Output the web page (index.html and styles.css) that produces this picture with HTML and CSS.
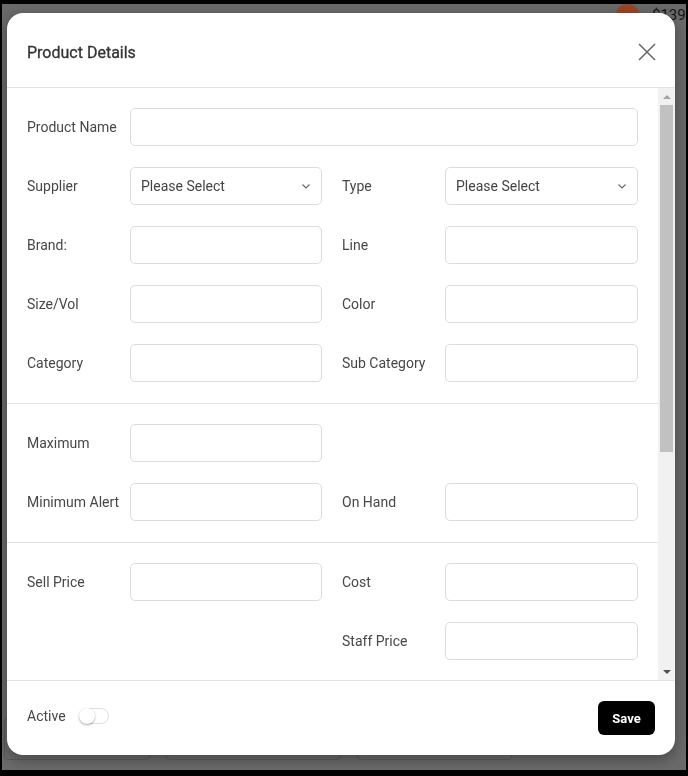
FILE: index.html
```html
<!DOCTYPE html>
<html lang="en">
<head>
    <meta charset="UTF-8">
    <meta name="viewport" content="width=device-width, initial-scale=1.0">
    <title>Product Details</title>
    <link rel="stylesheet" href="styles.css">
</head>
<body>
    <div class="page">
        <div class="topbar">
            <span class="avatar"></span>
            <span class="balance">$139</span>
        </div>
        <div class="cards">
            <div class="card"></div>
            <div class="card"></div>
            <div class="card"></div>
        </div>
    </div>

    <div class="modal">
        <div class="modal-header">
            <h2 class="modal-title">Product Details</h2>
            <button class="close-btn" type="button" aria-label="Close">
                <svg width="18" height="18" viewBox="0 0 18 18"><path d="M1 1L17 17M17 1L1 17" stroke="#6b6b6b" stroke-width="1.6" fill="none"/></svg>
            </button>
        </div>

        <div class="modal-body">
            <div class="scroll-content">
                <div class="section">
                    <label class="field-label">Product Name</label>
                    <input class="field wide" type="text">

                    <label class="field-label">Supplier</label>
                    <div class="select-wrap">
                        <select class="field"><option>Please Select</option></select>
                        <svg class="chev" width="8" height="5" viewBox="0 0 8 5"><path d="M0.5 0.5L4 4L7.5 0.5" stroke="#666" stroke-width="1.1" fill="none"/></svg>
                    </div>
                    <label class="field-label right">Type</label>
                    <div class="select-wrap">
                        <select class="field"><option>Please Select</option></select>
                        <svg class="chev" width="8" height="5" viewBox="0 0 8 5"><path d="M0.5 0.5L4 4L7.5 0.5" stroke="#666" stroke-width="1.1" fill="none"/></svg>
                    </div>

                    <label class="field-label">Brand:</label>
                    <input class="field" type="text">
                    <label class="field-label right">Line</label>
                    <input class="field" type="text">

                    <label class="field-label">Size/Vol</label>
                    <input class="field" type="text">
                    <label class="field-label right">Color</label>
                    <input class="field" type="text">

                    <label class="field-label">Category</label>
                    <input class="field" type="text">
                    <label class="field-label right">Sub Category</label>
                    <input class="field" type="text">
                </div>

                <div class="section">
                    <label class="field-label">Maximum</label>
                    <input class="field" type="number">
                    <span></span><span></span>

                    <label class="field-label">Minimum Alert</label>
                    <input class="field" type="number">
                    <label class="field-label right">On Hand</label>
                    <input class="field" type="number">
                </div>

                <div class="section last">
                    <label class="field-label">Sell Price</label>
                    <input class="field" type="number">
                    <label class="field-label right">Cost</label>
                    <input class="field" type="number">

                    <span></span><span></span>
                    <label class="field-label right">Staff Price</label>
                    <input class="field" type="number">
                </div>
            </div>

            <div class="scrollbar">
                <span class="arrow up"></span>
                <div class="track"><div class="thumb"></div></div>
                <span class="arrow down"></span>
            </div>
        </div>

        <div class="modal-footer">
            <div class="active-row">
                <span class="field-label">Active</span>
                <span class="toggle"><span class="knob"></span></span>
            </div>
            <button class="save-btn" type="button">Save</button>
        </div>
    </div>
</body>
</html>
```

FILE: styles.css
```css
html, body {
    margin: 0;
    padding: 0;
}
body {
    background-color: #000;
    font-family: Roboto, "Liberation Sans", Arial, sans-serif;
    width: 688px;
    height: 776px;
    overflow: hidden;
}
.page {
    margin: 4px 2px 0 2px;
    height: 766px;
    background-color: #6a6a6a;
    display: flex;
    flex-direction: column;
}
.topbar {
    display: flex;
    justify-content: flex-end;
    align-items: center;
    gap: 12px;
    height: 22px;
    overflow: hidden;
}
.avatar {
    width: 25px;
    height: 25px;
    border-radius: 50%;
    background-color: #9c4526;
    margin-top: 2px;
}
.balance {
    font-size: 15px;
    color: #151515;
    width: 34px;
    overflow: hidden;
    white-space: nowrap;
}
.cards {
    margin-top: auto;
    margin-bottom: 10px;
    display: flex;
    gap: 16px;
    padding-left: 2px;
}
.card {
    height: 40px;
    border: 1px solid #5a5a5a;
    border-radius: 4px;
}
.card:nth-child(1) { width: 144px; }
.card:nth-child(2) { width: 173px; }
.card:nth-child(3) { width: 153px; }

.modal {
    position: fixed;
    left: 7px;
    top: 13px;
    width: 668px;
    height: 742px;
    background-color: #fff;
    border-radius: 16px;
    display: flex;
    flex-direction: column;
    overflow: hidden;
    box-shadow: 0 4px 14px rgba(0, 0, 0, 0.35);
}
.modal-header {
    flex-shrink: 0;
    box-sizing: border-box;
    height: 75px;
    border-bottom: 1px solid #e2e2e2;
    display: flex;
    align-items: center;
    justify-content: space-between;
    padding: 3px 19px 0 20px;
}
.modal-title {
    margin: 0;
    padding-top: 2px;
    font-size: 16px;
    font-weight: 400;
    -webkit-text-stroke: 0.3px #333;
    color: #333;
}
.close-btn {
    background: none;
    border: none;
    padding: 0;
    width: 18px;
    height: 18px;
    cursor: pointer;
}
.close-btn svg {
    display: block;
}

.modal-body {
    flex: 1;
    display: flex;
    min-height: 0;
}
.scroll-content {
    flex: 1;
    overflow: hidden;
}
.scrollbar {
    width: 17px;
    flex-shrink: 0;
    background-color: #f1f1f1;
    display: flex;
    flex-direction: column;
}
.arrow {
    height: 17px;
    flex-shrink: 0;
    display: flex;
    align-items: center;
    justify-content: center;
}
.arrow::before {
    content: "";
    border-left: 4px solid transparent;
    border-right: 4px solid transparent;
}
.arrow.up::before {
    border-bottom: 4px solid #a3a3a3;
}
.arrow.down::before {
    border-top: 4px solid #505050;
}
.track {
    flex: 1;
}
.thumb {
    height: 347px;
    margin: 0 2px;
    background-color: #c1c1c1;
}

.section {
    display: grid;
    grid-template-columns: 103px 192px 123px 1fr;
    row-gap: 21px;
    padding: 20px 20px 21px 20px;
    border-bottom: 1px solid #e2e2e2;
}
.section.last {
    border-bottom: none;
}
.field-label {
    align-self: center;
    font-size: 14px;
    color: #474747;
}
.field-label.right {
    padding-left: 20px;
}
.field {
    height: 38px;
    box-sizing: border-box;
    width: 100%;
    border: 1px solid #dcdcdc;
    border-radius: 5px;
    padding: 0 10px;
    font-family: inherit;
    font-size: 14px;
    color: #444;
    background-color: #fff;
    outline: none;
}
.field.wide {
    grid-column: 2 / 5;
}
.select-wrap {
    position: relative;
}
.select-wrap select {
    appearance: none;
    -webkit-appearance: none;
}
.chev {
    position: absolute;
    right: 12px;
    top: 17px;
    pointer-events: none;
}

.modal-footer {
    height: 75px;
    flex-shrink: 0;
    box-sizing: border-box;
    border-top: 1px solid #e2e2e2;
    display: flex;
    align-items: center;
    justify-content: space-between;
    padding: 0 20px;
}
.active-row {
    display: flex;
    align-items: center;
    gap: 13px;
    margin-top: -4px;
}
.toggle {
    position: relative;
    width: 30px;
    height: 16px;
    box-sizing: border-box;
    border: 1px solid #dedede;
    border-radius: 8px;
    background-color: #fff;
}
.knob {
    position: absolute;
    left: -1px;
    top: -1px;
    width: 16px;
    height: 16px;
    border-radius: 50%;
    background-color: #fff;
    box-shadow: 0 1px 2px rgba(0, 0, 0, 0.35);
}
.save-btn {
    width: 57px;
    height: 34px;
    background-color: #000;
    color: #fff;
    border: none;
    border-radius: 6px;
    font-family: inherit;
    font-weight: 700;
    font-size: 13px;
    cursor: pointer;
}
```
